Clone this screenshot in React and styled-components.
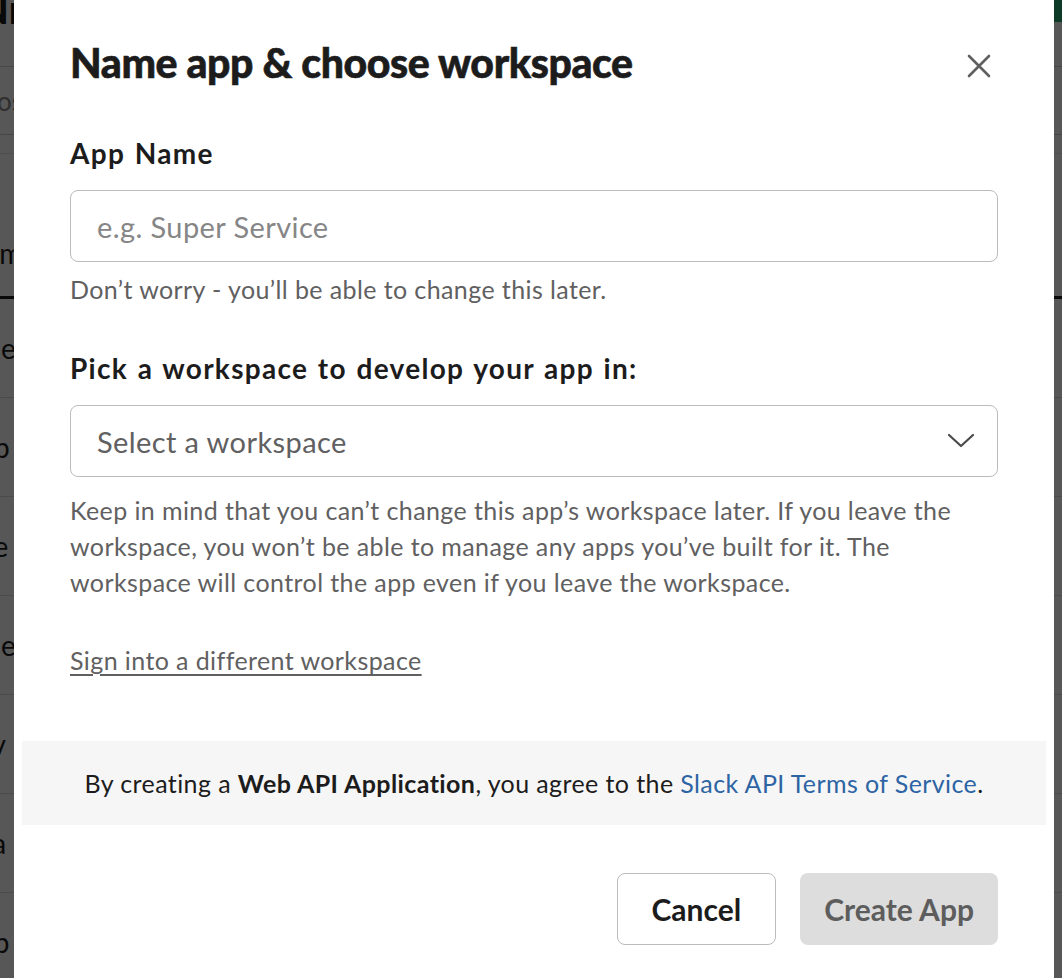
import React from 'react';
import styled, { createGlobalStyle } from 'styled-components';

const GlobalStyle = createGlobalStyle`
  html, body {
    margin: 0;
    padding: 0;
    background: #ffffff;
    overflow: hidden;
  }
  body {
    font-family: Lato, "Noto Sans", "Liberation Sans", sans-serif;
    color: #1d1c1d;
  }
`;

/* ---------- page behind the modal ---------- */

const Page = styled.div`
  height: 978px;
  overflow: hidden;
  margin-left: -22px;
`;

const PageHeader = styled.div`
  height: 66px;
  border-bottom: 1px solid #d0d0d0;
  display: flex;
  justify-content: space-between;
  align-items: flex-start;
`;

const PageTitle = styled.div`
  font-size: 40px;
  font-weight: 900;
  line-height: 26px;
  margin-top: -4px;
`;

const GreenButton = styled.div`
  width: 120px;
  height: 22px;
  background: #2bac76;
  margin-right: -30px;
`;

const SubBar = styled.div`
  height: 67px;
  border-bottom: 1px solid #d0d0d0;
  display: flex;
  align-items: center;
  font-size: 26px;
  color: #888;
  padding-left: 4px;
`;

const TableHead = styled.div`
  height: 146px;
  border-top: 1px solid #e4e4e4;
  border-bottom: 3px solid #1d1c1d;
  margin-top: 18px;
  display: flex;
  align-items: flex-end;
  padding-bottom: 26px;
  box-sizing: border-box;
  font-size: 28px;
`;

const Row = styled.div`
  height: 98px;
  border-bottom: 1px solid #dcdcdc;
  display: flex;
  align-items: center;
  font-size: 28px;
`;

/* ---------- modal ---------- */

const Overlay = styled.div`
  position: fixed;
  inset: 0;
  background: rgba(0, 0, 0, 0.66);
  display: flex;
  justify-content: center;
  align-items: flex-start;
  padding-left: 6px;
`;

const Modal = styled.div`
  width: 1040px;
  height: 978px;
  flex-shrink: 0;
  background: #ffffff;
  box-sizing: border-box;
  padding: 0 56px;
  display: flex;
  flex-direction: column;
`;

const Header = styled.div`
  display: flex;
  align-items: center;
  justify-content: space-between;
  height: 135px;
`;

const Title = styled.h1`
  margin: 0;
  font-size: 41px;
  font-weight: 900;
  letter-spacing: -0.4px;
  line-height: 1;
  padding-bottom: 11px;
  -webkit-text-stroke: 0.6px #1d1c1d;
`;

const CloseButton = styled.button`
  border: 0;
  background: none;
  padding: 0;
  width: 30px;
  height: 30px;
  display: flex;
  align-items: center;
  justify-content: center;
  margin: 0 4px 4px 0;
  color: #616061;
  cursor: pointer;
`;

const Label = styled.label`
  display: block;
  font-size: 28px;
  font-weight: 700;
  letter-spacing: 1.3px;
  word-spacing: 1.5px;
  line-height: 36px;
  margin-top: ${(p) => p.top || 0}px;
  margin-bottom: 19px;
`;

const Field = styled.div`
  height: 72px;
  box-sizing: border-box;
  border: 1.5px solid #bcbcbc;
  border-radius: 8px;
  display: flex;
  align-items: center;
  justify-content: space-between;
  padding: 0 22px 0 26px;
  font-size: 29px;
  letter-spacing: 0.4px;
  color: ${(p) => p.color || '#868686'};
`;

const Help = styled.p`
  margin: 0;
  font-size: 25px;
  letter-spacing: 0.4px;
  line-height: 36px;
  color: #616061;
  padding-top: ${(p) => p.top || 9}px;
`;

const TextLink = styled.a`
  font-size: 25px;
  letter-spacing: 0.4px;
  line-height: 36px;
  color: #616061;
  text-decoration: underline;
  text-underline-offset: 4px;
  align-self: flex-start;
  margin-top: 42px;
`;

const Notice = styled.div`
  margin: 63px -48px 0;
  height: 84px;
  background: #f6f6f6;
  display: flex;
  align-items: center;
  justify-content: center;
  font-size: 25px;
  letter-spacing: 0.4px;
  color: #1d1c1d;
`;

const Blue = styled.a`
  color: #2d64a3;
  text-decoration: none;
`;

const Actions = styled.div`
  display: flex;
  justify-content: flex-end;
  gap: 24px;
  margin-top: 48px;
`;

const Button = styled.button`
  height: 72px;
  box-sizing: border-box;
  padding: 0 ${(p) => (p.primary ? 24 : 34)}px;
  border-radius: 8px;
  font-family: inherit;
  font-size: 30px;
  font-weight: 700;
  border: ${(p) => (p.primary ? '0' : '1.5px solid #bcbcbc')};
  background: ${(p) => (p.primary ? '#dddddd' : '#ffffff')};
  color: ${(p) => (p.primary ? '#5e5d5e' : '#1d1c1d')};
`;

const rows = ['Home', 'Shop', 'Phone', 'Time', 'Nav', 'Java', 'App'];

export default function App() {
  return (
    <>
      <GlobalStyle />
      <Page>
        <PageHeader>
          <PageTitle>Nm</PageTitle>
          <GreenButton />
        </PageHeader>
        <SubBar>Pos</SubBar>
        <TableHead>Nm</TableHead>
        {rows.map((r) => (
          <Row key={r}>{r.slice(-2).toLowerCase()}</Row>
        ))}
      </Page>
      <Overlay>
        <Modal>
          <Header>
            <Title>Name app &amp; choose workspace</Title>
            <CloseButton aria-label="Close">
              <svg width="24" height="24" viewBox="0 0 24 24" fill="none">
                <path d="M2 2L22 22M22 2L2 22" stroke="currentColor" strokeWidth="2.6" strokeLinecap="round" />
              </svg>
            </CloseButton>
          </Header>

          <Label>App Name</Label>
          <Field>e.g. Super Service</Field>
          <Help>Don’t worry - you’ll be able to change this later.</Help>

          <Label top={43}>Pick a workspace to develop your app in:</Label>
          <Field color="#616061">
            Select a workspace
            <svg width="28" height="16" viewBox="0 0 28 16" fill="none">
              <path d="M2 2L14 13L26 2" stroke="#4a4a4a" strokeWidth="2.2" strokeLinecap="round" strokeLinejoin="round" />
            </svg>
          </Field>
          <Help top={15}>
            Keep in mind that you can’t change this app’s workspace later. If you leave the workspace, you won’t be able
            to manage any apps you’ve built for it. The workspace will control the app even if you leave the workspace.
          </Help>

          <TextLink href="#">Sign into a different workspace</TextLink>

          <Notice>
            <span>
              By creating a <b>Web API Application</b>, you agree to the <Blue href="#">Slack API Terms of Service</Blue>.
            </span>
          </Notice>

          <Actions>
            <Button>Cancel</Button>
            <Button primary>Create App</Button>
          </Actions>
        </Modal>
      </Overlay>
    </>
  );
}
